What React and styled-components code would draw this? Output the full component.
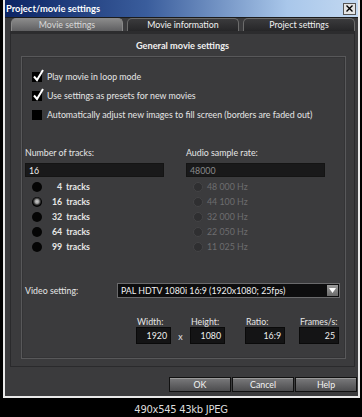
import React from 'react'
import styled, { createGlobalStyle } from 'styled-components'

const GlobalStyle = createGlobalStyle`
  html, body {
    margin: 0;
    padding: 0;
    background: #000;
  }
  body {
    font-family: Lato, "Noto Sans", sans-serif;
    font-size: 8.8px;
    color: #e6e6e6;
  }
`

const Page = styled.div`
  width: 362px;
  height: 417px;
  background: #000;
  overflow: hidden;
`

const Dialog = styled.div`
  box-sizing: border-box;
  margin-left: 3px;
  width: 357px;
  height: 398px;
  border: 2px solid #e9e9e9;
  border-top: none;
  background: #3b3b3d;
  display: flex;
  flex-direction: column;
`

const TitleBar = styled.div`
  height: 17px;
  display: flex;
  align-items: center;
  justify-content: space-between;
  padding: 0 2px 0 1px;
  background: linear-gradient(to right, #0c2464 0%, #3a5d9c 40%, #a9c7ea 80%, #c2d8f1 100%);
  border-bottom: 1px solid #1b1b1b;
`

const Title = styled.span`
  font-weight: 700;
  font-size: 9.4px;
  color: #fff;
`

const CloseBox = styled.div`
  width: 11px;
  height: 10px;
  background: #e4e4e4;
  border: 1px solid #555;
  display: flex;
  align-items: center;
  justify-content: center;
`

const TabRow = styled.div`
  display: flex;
  gap: 4px;
  padding: 0 3px 0 6px;
  height: 13px;
`

const Tab = styled.div`
  flex: 1;
  box-sizing: border-box;
  border: 1px solid ${p => (p.active ? '#8a8a8a' : '#6c6c6c')};
  border-bottom: none;
  border-radius: 5px 5px 0 0;
  background: ${p =>
    p.active
      ? 'linear-gradient(#8a8a8a, #5f5f61)'
      : 'linear-gradient(#3a3a3c, #262628)'};
  color: ${p => (p.active ? '#d8d8d8' : '#f2f2f2')};
  display: flex;
  align-items: center;
  justify-content: center;
  line-height: 1;
`

const Panel = styled.div`
  box-sizing: border-box;
  margin: 0 3px 0 5px;
  height: 336px;
  background: #3b3b3d;
  border: 1px solid #2a2a2c;
  border-top: 3px solid #2c2c2e;
  display: flex;
  flex-direction: column;
`

const Heading = styled.div`
  text-align: center;
  font-weight: 700;
  font-size: 9.2px;
  line-height: 14px;
  margin-top: 5px;
  color: #f0f0f0;
`

const Group = styled.div`
  box-sizing: border-box;
  margin: 3px 8px 0 10px;
  height: 303px;
  border: 1px solid #58585a;
  box-shadow: inset 0 0 0 1px #343436;
  padding: 10px 4px 0 3px;
  display: flex;
  flex-direction: column;
`

const CheckRow = styled.div`
  height: 19px;
  display: flex;
  align-items: center;
  gap: 5px;
  padding-left: 7px;
`

const Box = styled.div`
  width: 10px;
  height: 10px;
  background: #000;
  position: relative;
`

const Tick = styled.svg`
  position: absolute;
  left: 1px;
  top: -3px;
`

const Columns = styled.div`
  display: flex;
  gap: 22px;
  margin-top: 23px;
`

const Column = styled.div`
  width: 139px;
  display: flex;
  flex-direction: column;
`

const Label = styled.div`
  line-height: 12px;
`

const Field = styled.div`
  box-sizing: border-box;
  margin-top: 4px;
  height: 14px;
  background: #19191a;
  border: 1px solid #141414;
  color: ${p => (p.disabled ? '#8a8a8a' : '#ececec')};
  padding-left: 3px;
  display: flex;
  align-items: center;
`

const RadioList = styled.div`
  display: flex;
  flex-direction: column;
  padding-top: 2px;
  padding-left: ${p => p.indent}px;
`

const RadioRow = styled.div`
  height: 15px;
  display: flex;
  align-items: center;
  gap: ${p => p.gap}px;
  color: ${p => (p.disabled ? '#6d6d6f' : '#e6e6e6')};
  font-weight: ${p => (p.disabled ? 400 : 700)};
`

const Radio = styled.div`
  width: 10px;
  height: 10px;
  border-radius: 50%;
  box-sizing: border-box;
  background: ${p =>
    p.disabled
      ? '#2f2f31'
      : p.checked
      ? 'radial-gradient(circle at 50% 45%, #d0d0d0 0, #9a9a9a 2px, #4a4a4a 3px, #000 4.5px)'
      : '#050505'};
  border: ${p => (p.disabled ? '1px solid #444446' : 'none')};
`

const Num = styled.span`
  display: inline-block;
  min-width: 10px;
  text-align: right;
  margin-right: 4px;
`

const VideoRow = styled.div`
  display: flex;
  align-items: center;
  margin-top: 29px;
  height: 15px;
`

const VideoLabel = styled.div`
  width: 92px;
`

const Select = styled.div`
  box-sizing: border-box;
  width: 223px;
  height: 15px;
  background: #0d0d0e;
  border: 1px solid #6a6a6c;
  display: flex;
  align-items: center;
  justify-content: space-between;
  padding-left: 3px;
  color: #f2f2f2;
`

const Arrow = styled.div`
  width: 11px;
  height: 11px;
  margin-right: 1px;
  background: linear-gradient(#9a9a9a, #6a6a6a);
  display: flex;
  align-items: center;
  justify-content: center;
`

const DimRow = styled.div`
  display: flex;
  align-items: flex-end;
  margin-top: 18px;
  padding-left: 111px;
`

const Dim = styled.div`
  display: flex;
  flex-direction: column;
  margin-left: ${p => p.gap || 0}px;
`

const DimLabel = styled.div`
  line-height: 11px;
  padding-left: 1px;
`

const DimInput = styled.div`
  box-sizing: border-box;
  width: ${p => p.w}px;
  height: 17px;
  background: #141415;
  border: 1px solid #0a0a0a;
  color: #f0f0f0;
  display: flex;
  align-items: center;
  justify-content: flex-end;
  padding-right: 3px;
`

const Times = styled.div`
  width: 19px;
  text-align: center;
  line-height: 12px;
  padding-bottom: 1px;
`

const Footer = styled.div`
  display: flex;
  justify-content: flex-end;
  gap: 1px;
  padding: 10px 1px 0 0;
`

const Button = styled.div`
  box-sizing: border-box;
  width: 62px;
  height: 15px;
  background: linear-gradient(#7a7a7c, #4c4c4e);
  border: 1px solid #111;
  box-shadow: inset 0 1px 0 #9a9a9a;
  color: #f4f4f4;
  display: flex;
  align-items: center;
  justify-content: center;
`

const Caption = styled.div`
  text-align: center;
  font-family: "DejaVu Sans", sans-serif;
  font-size: 10px;
  color: #dcdcdc;
  margin-top: 6px;
  letter-spacing: -0.3px;
`

const checks = [
  { label: 'Play movie in loop mode', on: true },
  { label: 'Use settings as presets for new movies', on: true },
  { label: 'Automatically adjust new images to fill screen (borders are faded out)', on: false },
]

const tracks = ['4', '16', '32', '64', '99']
const rates = ['48 000 Hz', '44 100 Hz', '32 000 Hz', '22 050 Hz', '11 025 Hz']

function Check({ on }) {
  return (
    <Box>
      {on && (
        <Tick width="11" height="13" viewBox="0 0 11 13">
          <path d="M1 7.5 L4 11 L10 1" fill="none" stroke="#fff" strokeWidth="2" />
        </Tick>
      )}
    </Box>
  )
}

export default function App() {
  return (
    <Page>
      <GlobalStyle />
      <Dialog>
        <TitleBar>
          <Title>Project/movie settings</Title>
          <CloseBox>
            <svg width="7" height="7" viewBox="0 0 7 7">
              <path d="M0.5 0.5 L6.5 6.5 M6.5 0.5 L0.5 6.5" stroke="#000" strokeWidth="1.4" />
            </svg>
          </CloseBox>
        </TitleBar>
        <TabRow>
          <Tab active>Movie settings</Tab>
          <Tab>Movie information</Tab>
          <Tab>Project settings</Tab>
        </TabRow>
        <Panel>
          <Heading>General movie settings</Heading>
          <Group>
            {checks.map(c => (
              <CheckRow key={c.label}>
                <Check on={c.on} />
                {c.label}
              </CheckRow>
            ))}
            <Columns>
              <Column>
                <Label>Number of tracks:</Label>
                <Field>16</Field>
                <RadioList indent={7}>
                  {tracks.map(t => (
                    <RadioRow key={t} gap={10}>
                      <Radio checked={t === '16'} />
                      <span>
                        <Num>{t}</Num>tracks
                      </span>
                    </RadioRow>
                  ))}
                </RadioList>
              </Column>
              <Column>
                <Label>Audio sample rate:</Label>
                <Field disabled>48000</Field>
                <RadioList indent={7}>
                  {rates.map(r => (
                    <RadioRow key={r} gap={4} disabled>
                      <Radio disabled />
                      {r}
                    </RadioRow>
                  ))}
                </RadioList>
              </Column>
            </Columns>
            <VideoRow>
              <VideoLabel>Video setting:</VideoLabel>
              <Select>
                PAL HDTV 1080i 16:9 (1920x1080; 25fps)
                <Arrow>
                  <svg width="7" height="5" viewBox="0 0 7 5">
                    <path d="M0 0 H7 L3.5 5 Z" fill="#fff" />
                  </svg>
                </Arrow>
              </Select>
            </VideoRow>
            <DimRow>
              <Dim>
                <DimLabel>Width:</DimLabel>
                <DimInput w={35}>1920</DimInput>
              </Dim>
              <Times>x</Times>
              <Dim>
                <DimLabel>Height:</DimLabel>
                <DimInput w={35}>1080</DimInput>
              </Dim>
              <Dim gap={20}>
                <DimLabel>Ratio:</DimLabel>
                <DimInput w={40}>16:9</DimInput>
              </Dim>
              <Dim gap={14}>
                <DimLabel>Frames/s:</DimLabel>
                <DimInput w={40}>25</DimInput>
              </Dim>
            </DimRow>
          </Group>
        </Panel>
        <Footer>
          <Button>OK</Button>
          <Button>Cancel</Button>
          <Button>Help</Button>
        </Footer>
      </Dialog>
      <Caption>490x545 43kb JPEG</Caption>
    </Page>
  )
}
